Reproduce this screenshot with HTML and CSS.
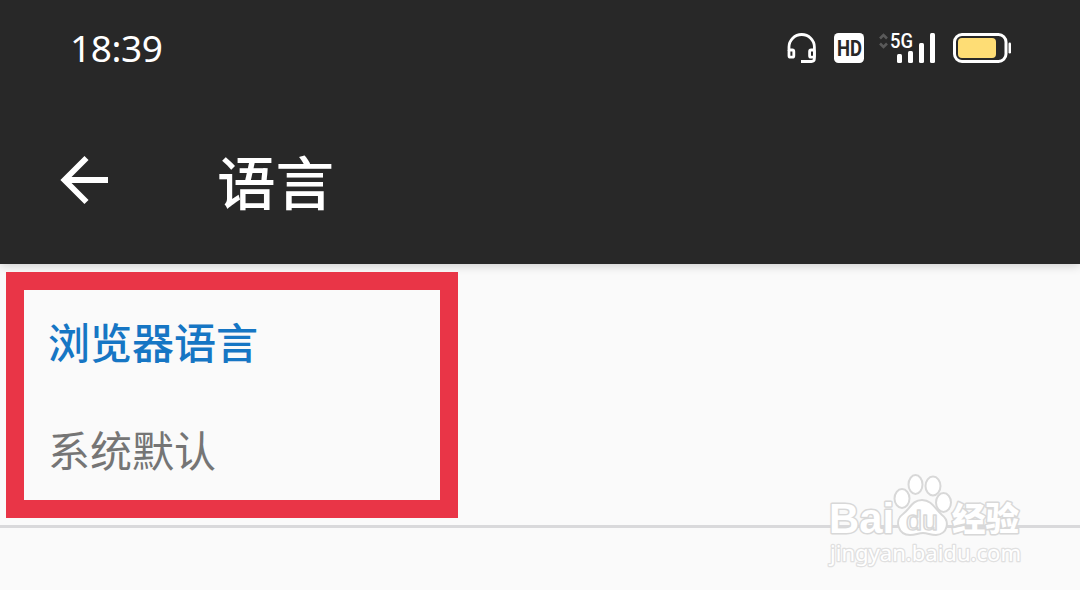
FILE: index.html
```html
<!DOCTYPE html>
<html lang="zh-CN">
<head>
    <meta charset="UTF-8">
    <meta name="viewport" content="width=device-width, initial-scale=1.0">
    <title>语言</title>
    <link rel="stylesheet" href="styles.css">
</head>
<body>
    <header class="header">
        <div class="status-bar">
            <span class="time">18:39</span>
            <div class="status-icons">
                <svg class="headset" width="30" height="30" viewBox="0 0 30 30" fill="none" stroke="#fff" stroke-width="2.8">
                    <path d="M2 18V14a12.7 12.5 0 0 1 25.4 0V25.5q0 3-3 3H14"/>
                    <rect x="2" y="17" width="4.8" height="7.2" rx="1.5"/>
                    <rect x="22.6" y="17" width="4.8" height="7.2" rx="1.5"/>
                </svg>
                <svg class="hd" width="30" height="30" viewBox="0 0 30 30">
                    <rect width="30" height="30" rx="4.5" fill="#fff"/>
                    <text class="hd-text" x="3" y="23" textLength="25" lengthAdjust="spacingAndGlyphs">HD</text>
                </svg>
                <svg class="signal" width="57" height="30" viewBox="0 0 57 30">
                    <path d="M2 5.5l3.5-3.5L9 5.5M2 10.5L5.5 14L9 10.5" fill="none" stroke="#5a5a5a" stroke-width="2.6"/>
                    <text class="net-text" x="12" y="15" textLength="23" lengthAdjust="spacingAndGlyphs">5G</text>
                    <g fill="#fff">
                        <rect x="19" y="21" width="5" height="9" rx="1.5"/>
                        <rect x="30" y="18" width="5" height="12" rx="1.5"/>
                        <rect x="41" y="10" width="5" height="20" rx="1.5"/>
                        <rect x="52" y="0" width="5" height="30" rx="1.5"/>
                    </g>
                </svg>
                <svg class="battery" width="59" height="30" viewBox="0 0 59 30">
                    <rect x="1.5" y="1.5" width="51.5" height="27" rx="7.5" fill="none" stroke="#fff" stroke-width="3"/>
                    <rect x="5" y="5" width="38" height="20" rx="4" fill="#fedd75"/>
                    <rect x="55.5" y="9.5" width="2.5" height="11" rx="1.2" fill="#fff"/>
                </svg>
            </div>
        </div>
        <div class="toolbar">
            <svg class="back" width="50" height="50" viewBox="0 0 50 50" fill="none" stroke="#fff" stroke-width="5.8">
                <path d="M27.5 3L5.500 25L27.5 47M6 25H49"/>
            </svg>
            <h1>语言</h1>
        </div>
    </header>

    <main class="settings">
        <div class="setting">
            <h2>浏览器语言</h2>
            <p>系统默认</p>
        </div>
    </main>

    <svg class="watermark" width="210" height="110" viewBox="0 0 210 110">
        <g class="brand">
            <text class="baidu" x="8" y="73" textLength="65" lengthAdjust="spacingAndGlyphs">Bai</text>
            <ellipse cx="81" cy="38.5" rx="7.5" ry="9.5"/>
            <ellipse cx="94.5" cy="24.5" rx="7" ry="9.5"/>
            <ellipse cx="112" cy="26" rx="7.5" ry="9.5"/>
            <ellipse cx="122.5" cy="42.5" rx="7.5" ry="9.5"/>
            <path d="M101 40C91 40 89 49 82 54C73 60 77 75 89 75C95 75 97 73 102 73C107 73 109 75 115 75C127 74 129 61 121 55C114 49 111 40 101 40Z"/>
            <text class="du" x="85" y="70" textLength="32" lengthAdjust="spacingAndGlyphs">du</text>
            <text class="jingyan" x="131" y="71" textLength="67" lengthAdjust="spacingAndGlyphs">经验</text>
        </g>
        <text class="site" x="9" y="101" textLength="191" lengthAdjust="spacingAndGlyphs">jingyan.baidu.com</text>
    </svg>
</body>
</html>
```
FILE: styles.css
```css
* {
    box-sizing: border-box;
}

body {
    margin: 0;
    height: 590px;
    overflow: hidden;
    position: relative;
    background-color: #fafafa;
    font-family: "Noto Sans CJK SC", sans-serif;
}

h1,
h2,
p {
    margin: 0;
}

svg {
    overflow: visible;
}

.header {
    height: 264px;
    background-color: #282828;
    color: #fff;
    box-shadow: 0 1px 10px rgba(0, 0, 0, 0.2);
}

.status-bar {
    display: flex;
    justify-content: space-between;
    align-items: center;
    height: 96px;
    padding: 0 68px 0 70px;
}

.time {
    font-family: "Noto Sans", sans-serif;
    font-size: 37px;
    line-height: 48px;
    letter-spacing: -0.4px;
}

.status-icons {
    display: flex;
}

.hd {
    margin-left: 17px;
}

.signal {
    margin-left: 14px;
}

.battery {
    margin-left: 18px;
}

.hd-text {
    font: 700 22px Roboto, sans-serif;
    fill: #282828;
}

.net-text {
    font: 500 20px Roboto, sans-serif;
    fill: #fff;
}

.toolbar {
    display: flex;
    align-items: center;
    height: 168px;
    padding: 0 59px;
}

.toolbar h1 {
    margin-left: 108px;
    padding-bottom: 1px;
    font-size: 58.5px;
    font-weight: 500;
    line-height: 84px;
}

.settings {
    height: 264px;
    padding: 8px 6px;
    border-bottom: 3px solid #d9d9db;
}

.setting {
    width: 452px;
    height: 246px;
    padding: 21px 24px 0;
    border: 18px solid #e93547;
    background-color: #fafafa;
}

.setting h2 {
    color: #1676c4;
    font-size: 42px;
    font-weight: 500;
    line-height: 60px;
}

.setting p {
    margin-top: 48px;
    color: #757575;
    font-size: 42px;
    line-height: 60px;
}

/* logo floating over the page */
.watermark {
    position: absolute;
    left: 821px;
    top: 460px;
}

.brand {
    fill: #fff;
    stroke: #d8d8d8;
    stroke-width: 2px;
    stroke-linejoin: round;
}

.baidu {
    font: 700 43px "Liberation Sans", sans-serif;
    paint-order: stroke;
    stroke-width: 3px;
}

.du {
    font: 400 27px "Liberation Sans", sans-serif;
    stroke-width: 1.5px;
}

.jingyan {
    font: 900 33px "Noto Sans CJK SC", sans-serif;
    paint-order: stroke;
    stroke-width: 3px;
}

.site {
    font: 400 22.5px "Noto Sans", sans-serif;
    fill: #fff;
    stroke: #e0e0e0;
    stroke-width: 2.5px;
    paint-order: stroke;
    stroke-linejoin: round;
}
```
